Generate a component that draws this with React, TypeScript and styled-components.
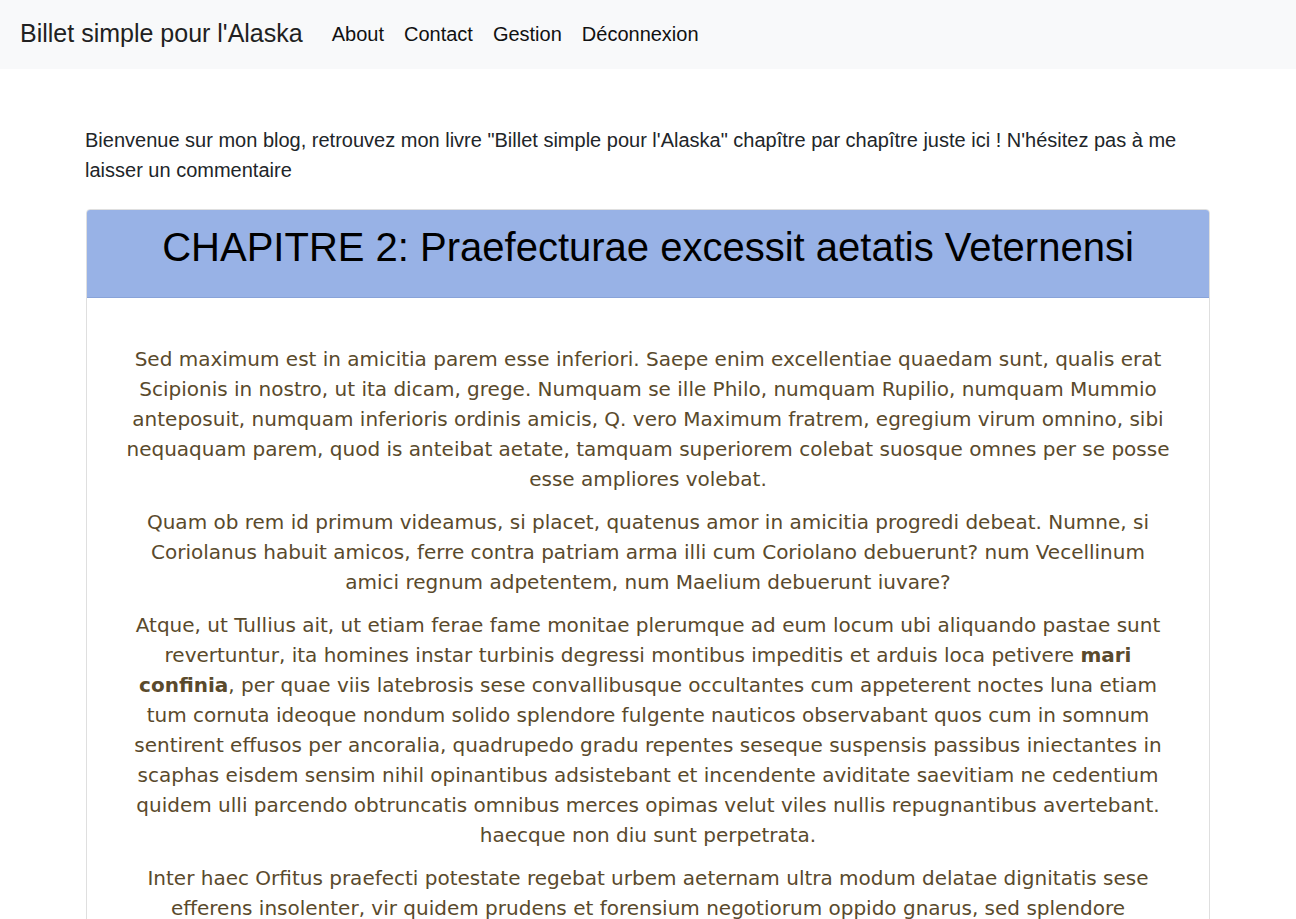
import React from "react";
import styled, { createGlobalStyle } from "styled-components";

const GlobalStyle = createGlobalStyle`
  * { box-sizing: border-box; }
  html, body { margin: 0; padding: 0; background: #ffffff; }
  body {
    font-family: "Liberation Sans", Arial, sans-serif;
    color: #212529;
  }
`;

const NavBar = styled.nav`
  height: 69px;
  background: #f8f9fa;
  display: flex;
  align-items: center;
  padding: 0 20px 2px;
`;

const Brand = styled.a`
  font-size: 25px;
  color: #212121;
  text-decoration: none;
  margin-right: 19px;
  line-height: 1;
`;

const NavList = styled.ul`
  list-style: none;
  display: flex;
  margin: 0;
  padding: 0;
`;

const NavLink = styled.a`
  display: block;
  font-size: 20px;
  color: #111;
  text-decoration: none;
  padding: 0 10px;
  line-height: 1;
`;

const Container = styled.main`
  width: 1124px;
  margin: 0 auto;
  padding-top: 56px;
`;

const Intro = styled.p`
  font-size: 20px;
  line-height: 30px;
  margin: 0 0 24px -1px;
  color: #212529;
`;

const Card = styled.article`
  border: 1px solid #dfdfdf;
  border-radius: 4px;
  overflow: hidden;
`;

const CardHeader = styled.header`
  background: #98b2e6;
  border-bottom: 1px solid #88a3d9;
  padding: 13px 20px 26px;
  text-align: center;
`;

const Title = styled.h1`
  margin: 0;
  font-size: 40px;
  line-height: 48px;
  font-weight: 400;
  color: #000;
`;

const CardBody = styled.section`
  padding: 46px 36px 20px;
  text-align: center;
`;

const Para = styled.p`
  font-family: "DejaVu Sans", Verdana, sans-serif;
  font-size: 20px;
  line-height: 30px;
  color: #5a4a2c;
  margin: 0 0 13px;
`;

export default function App() {
  return (
    <>
      <GlobalStyle />
      <NavBar>
        <Brand href="#">Billet simple pour l'Alaska</Brand>
        <NavList>
          <li><NavLink href="#">About</NavLink></li>
          <li><NavLink href="#">Contact</NavLink></li>
          <li><NavLink href="#">Gestion</NavLink></li>
          <li><NavLink href="#">Déconnexion</NavLink></li>
        </NavList>
      </NavBar>
      <Container>
        <Intro>
          Bienvenue sur mon blog, retrouvez mon livre "Billet simple pour l'Alaska" chapître par chapître juste ici ! N'hésitez pas à me laisser un commentaire
        </Intro>
        <Card>
          <CardHeader>
            <Title>CHAPITRE 2: Praefecturae excessit aetatis Veternensi</Title>
          </CardHeader>
          <CardBody>
            <Para>
              Sed maximum est in amicitia parem esse inferiori. Saepe enim excellentiae quaedam sunt, qualis erat Scipionis in nostro, ut ita dicam, grege. Numquam se ille Philo, numquam Rupilio, numquam Mummio anteposuit, numquam inferioris ordinis amicis, Q. vero Maximum fratrem, egregium virum omnino, sibi nequaquam parem, quod is anteibat aetate, tamquam superiorem colebat suosque omnes per se posse esse ampliores volebat.
            </Para>
            <Para>
              Quam ob rem id primum videamus, si placet, quatenus amor in amicitia progredi debeat. Numne, si Coriolanus habuit amicos, ferre contra patriam arma illi cum Coriolano debuerunt? num Vecellinum amici regnum adpetentem, num Maelium debuerunt iuvare?
            </Para>
            <Para>
              Atque, ut Tullius ait, ut etiam ferae fame monitae plerumque ad eum locum ubi aliquando pastae sunt revertuntur, ita homines instar turbinis degressi montibus impeditis et arduis loca petivere <strong>mari confinia</strong>, per quae viis latebrosis sese convallibusque occultantes cum appeterent noctes luna etiam tum cornuta ideoque nondum solido splendore fulgente nauticos observabant quos cum in somnum sentirent effusos per ancoralia, quadrupedo gradu repentes seseque suspensis passibus iniectantes in scaphas eisdem sensim nihil opinantibus adsistebant et incendente aviditate saevitiam ne cedentium quidem ulli parcendo obtruncatis omnibus merces opimas velut viles nullis repugnantibus avertebant. haecque non diu sunt perpetrata.
            </Para>
            <Para>
              Inter haec Orfitus praefecti potestate regebat urbem aeternam ultra modum delatae dignitatis sese efferens insolenter, vir quidem prudens et forensium negotiorum oppido gnarus, sed splendore liberalium doctrinarum minus quam nobilem decuerat institutus, quo administrante seditiones sunt concitatae graves ob inopiam vini: huius avidis usus vulgus intentum ad motus asperos excitatur et crebros.
            </Para>
          </CardBody>
        </Card>
      </Container>
    </>
  );
}
